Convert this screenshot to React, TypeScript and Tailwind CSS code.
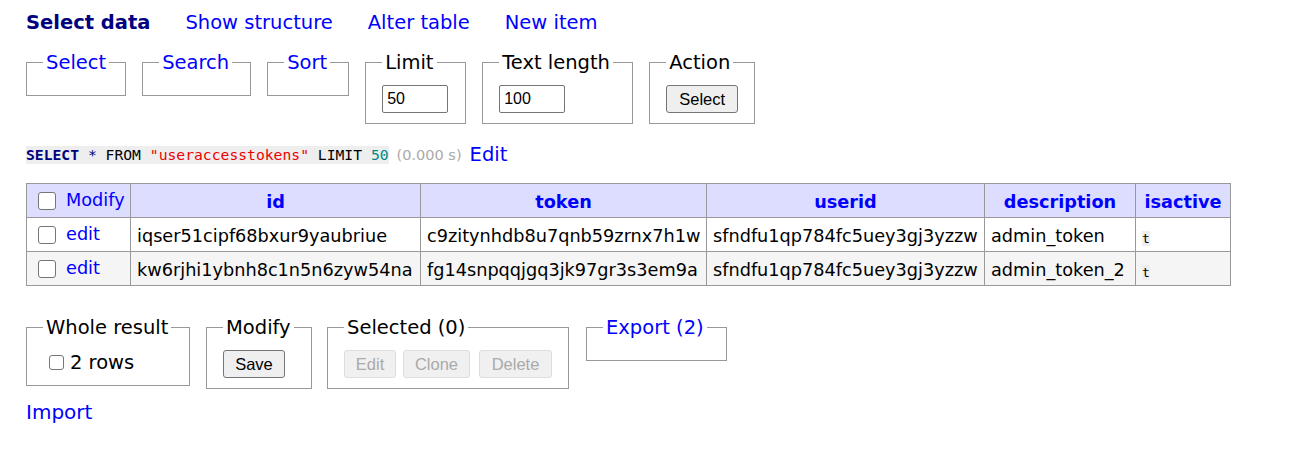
import React from 'react'

const rows = [
  {
    id: 'iqser51cipf68bxur9yaubriue',
    token: 'c9zitynhdb8u7qnb59zrnx7h1w',
    userid: 'sfndfu1qp784fc5uey3gj3yzzw',
    description: 'admin_token',
  },
  {
    id: 'kw6rjhi1ybnh8c1n5n6zyw54na',
    token: 'fg14snpqqjgq3jk97gr3s3em9a',
    userid: 'sfndfu1qp784fc5uey3gj3yzzw',
    description: 'admin_token_2',
  },
]

function Box({
  legend,
  link,
  className,
  children,
}: {
  legend: string
  link?: boolean
  className?: string
  children?: React.ReactNode
}) {
  return (
    <fieldset className={`border border-[#999] px-[16px] pt-[11px] pb-[10px] ${className ?? ''}`}>
      <legend className={`px-[3px] ${link ? 'text-[#00f]' : 'text-black'}`}>
        <span className="relative top-[1px]">{legend}</span>
      </legend>
      {children}
    </fieldset>
  )
}

function Check({ small }: { small?: boolean }) {
  return small ? (
    <span className="inline-block shrink-0 w-[15px] h-[15px] border border-[#767676] rounded-[3px] bg-white" />
  ) : (
    <span className="inline-block shrink-0 w-[18px] h-[18px] border border-[#767676] rounded-[3px] bg-white" />
  )
}

export default function App() {
  return (
    <div className="min-h-[454px] bg-white px-[26px] pt-[11px] font-['DejaVu_Sans',Verdana,sans-serif] text-[19.5px] leading-[24px] text-black">
      {/* menu */}
      <p className="flex gap-[35px]">
        <b className="text-[#000080]">Select data</b>
        <a className="text-[#00f]">Show structure</a>
        <a className="text-[#00f]">Alter table</a>
        <a className="text-[#00f]">New item</a>
      </p>

      {/* select form */}
      <div className="mt-[15px] flex items-start gap-[16px]">
        <Box legend="Select" link className="w-[100px]" />
        <Box legend="Search" link className="w-[109px]" />
        <Box legend="Sort" link className="w-[82px]" />
        <Box legend="Limit" className="w-[101px]">
          <input
            defaultValue="50"
            className="block w-[66px] h-[28px] border border-[#767676] rounded-[2px] pl-[4px] font-['Liberation_Sans',Arial,sans-serif] text-[16px]"
          />
        </Box>
        <Box legend="Text length" className="w-[151px]">
          <input
            defaultValue="100"
            className="block w-[66px] h-[28px] border border-[#767676] rounded-[2px] pl-[4px] font-['Liberation_Sans',Arial,sans-serif] text-[16px]"
          />
        </Box>
        <Box legend="Action" className="w-[106px]">
          <button className="block w-[72px] h-[28px] border border-[#767676] rounded-[3px] bg-[#efefef] font-['Liberation_Sans',Arial,sans-serif] text-[16.5px]">
            Select
          </button>
        </Box>
      </div>

      {/* query */}
      <p className="mt-[19px] flex items-center">
        <code className="bg-[#eee] font-['DejaVu_Sans_Mono',monospace] text-[14.7px] leading-[18px] whitespace-pre">
          <b className="text-[#000080]">SELECT</b>
          <span className="text-[#000080]"> * </span>
          <span>FROM </span>
          <span className="text-[#e00]">"useraccesstokens"</span>
          <span> LIMIT </span>
          <span className="text-[#088]">50</span>
        </code>
        <span className="ml-[8px] text-[14.5px] text-[#aaa]">(0.000 s)</span>
        <a className="ml-[8px] text-[#00f]">Edit</a>
      </p>

      {/* results */}
      <table className="mt-[16px] border-collapse table-fixed w-[1205px] text-[17.7px] leading-[22px]">
        <colgroup>
          <col className="w-[104px]" />
          <col className="w-[290px]" />
          <col className="w-[286px]" />
          <col className="w-[278px]" />
          <col className="w-[151px]" />
          <col className="w-[95px]" />
        </colgroup>
        <thead>
          <tr className="h-[34px] bg-[#ddf]">
            <td className="border border-[#999] px-[6px]">
              <div className="flex items-center gap-[10px] pl-[5px] pt-[1px]">
                <Check />
                <a className="text-[#00f] -mt-[3px]">Modify</a>
              </div>
            </td>
            {['id', 'token', 'userid', 'description', 'isactive'].map((h) => (
              <th key={h} className="border border-[#999] px-[6px] pt-[2px] text-center font-bold text-[#00f]">
                {h}
              </th>
            ))}
          </tr>
        </thead>
        <tbody>
          {rows.map((r, i) => (
            <tr key={r.id} className={`h-[34px] ${i % 2 ? 'bg-[#f5f5f5]' : 'bg-white'}`}>
              <td className="border border-[#999] px-[6px]">
                <div className="flex items-center gap-[10px] pl-[5px] pt-[1px]">
                  <Check />
                  <a className="text-[#00f] -mt-[3px]">edit</a>
                </div>
              </td>
              <td className="border border-[#999] px-[6px] pt-[2px] whitespace-nowrap">{r.id}</td>
              <td className="border border-[#999] px-[6px] pt-[2px] whitespace-nowrap">{r.token}</td>
              <td className="border border-[#999] px-[6px] pt-[2px] whitespace-nowrap">{r.userid}</td>
              <td className="border border-[#999] px-[6px] pt-[2px] whitespace-nowrap">{r.description}</td>
              <td className="border border-[#999] px-[6px] pt-[4px]">
                <code className="bg-[#eee] font-['DejaVu_Sans_Mono',monospace] text-[13px] leading-[17px]">t</code>
              </td>
            </tr>
          ))}
        </tbody>
      </table>

      {/* actions */}
      <div className="mt-[29px] flex items-start gap-[16px]">
        <Box legend="Whole result" className="w-[164px]">
          <label className="flex items-center h-[25px] pl-[6px] gap-[6px]">
            <Check small />
            <span>2 rows</span>
          </label>
        </Box>
        <Box legend="Modify" className="w-[106px]">
          <button className="block w-[62px] h-[28px] border border-[#767676] rounded-[3px] bg-[#efefef] font-['Liberation_Sans',Arial,sans-serif] text-[16.5px]">
            Save
          </button>
        </Box>
        <Box legend="Selected (0)" className="-ml-[1px] w-[242px]">
          <div className="flex gap-[7px] font-['Liberation_Sans',Arial,sans-serif] text-[16.5px] text-[#aaa]">
            <button disabled className="w-[52px] h-[28px] border border-[#ddd] rounded-[3px] bg-[#f0f0f0]">
              Edit
            </button>
            <button disabled className="w-[67px] h-[28px] border border-[#ddd] rounded-[3px] bg-[#f0f0f0]">
              Clone
            </button>
            <button disabled className="ml-[2px] w-[73px] h-[28px] border border-[#ddd] rounded-[3px] bg-[#f0f0f0]">
              Delete
            </button>
          </div>
        </Box>
        <Box legend="Export (2)" link className="ml-[1px] w-[141px]" />
      </div>

      <p className="mt-[11px]">
        <a className="text-[#00f] text-[20px]">Import</a>
      </p>
    </div>
  )
}
